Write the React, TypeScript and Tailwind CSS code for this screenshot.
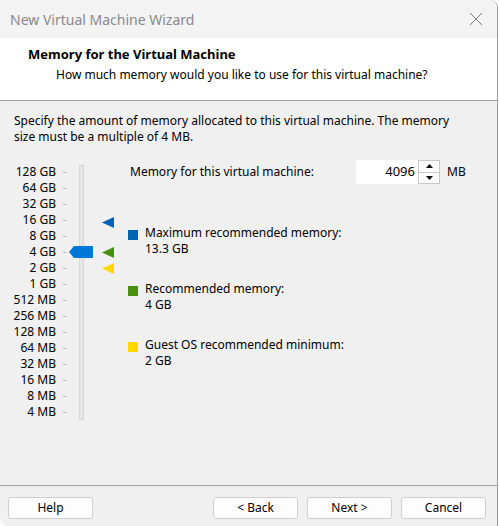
import React from 'react';

const sizes = [
  '128 GB', '64 GB', '32 GB', '16 GB', '8 GB', '4 GB', '2 GB', '1 GB',
  '512 MB', '256 MB', '128 MB', '64 MB', '32 MB', '16 MB', '8 MB', '4 MB',
];

function Tri({ color }: { color: string }) {
  return (
    <svg width="12" height="11" viewBox="0 0 12 11">
      <polygon points="0,5.5 12,0 12,11" fill={color} />
    </svg>
  );
}

function Button({ label }: { label: string }) {
  return (
    <button className="h-[22px] w-[85px] rounded-[3px] border border-[#d0d0d0] bg-[#fdfdfd] text-[12px] text-black">
      {label}
    </button>
  );
}

export default function App() {
  return (
    <div
      className="relative h-[526px] w-[499px] overflow-hidden bg-white"
      style={{ fontFamily: '"Segoe UI", "Noto Sans", sans-serif' }}
    >
      <div className="flex h-full w-[498px] flex-col overflow-hidden rounded-tr-[8px] rounded-bl-[8px] border-r border-[#9a9a9a] bg-[#f0f0f0]">
        {/* title bar */}
        <div className="flex h-[38px] items-center justify-between bg-[#f3f3f3] pl-[10px] pr-[14px]">
          <span className="text-[14px] text-[#8a8a8a]">New Virtual Machine Wizard</span>
          <svg width="14" height="14" viewBox="0 0 14 14">
            <path d="M1 1L13 13M13 1L1 13" stroke="#7a7a7a" strokeWidth="1" />
          </svg>
        </div>

        {/* header */}
        <div className="h-[63px] border-b border-[#a0a0a0] bg-white pl-[28px] pt-[7px]">
          <div className="text-[13px] font-bold leading-[18px] text-black">Memory for the Virtual Machine</div>
          <div className="pl-[28px] pt-[3px] text-[12px] leading-[18px] text-black">
            How much memory would you like to use for this virtual machine?
          </div>
        </div>

        {/* body */}
        <div className="flex-1 px-[14px] pt-[12px] text-[12px] text-black">
          <p className="w-[448px] leading-[16px]">
            Specify the amount of memory allocated to this virtual machine. The memory size must be a multiple of 4 MB.
          </p>

          <div className="mt-[19px] flex">
            {/* scale */}
            <div className="flex w-[42px] flex-col items-end">
              {sizes.map((s) => (
                <div key={s} className="h-[16px] whitespace-nowrap leading-[16px]">{s}</div>
              ))}
            </div>
            <div className="ml-[7px] flex w-[6px] flex-col pt-[8px]">
              {sizes.map((s) => (
                <div key={s} className="mb-[15px] h-px w-[3px] bg-[#b4b4b4]" />
              ))}
            </div>
            {/* track */}
            <div className="relative ml-[3px] h-[256px] w-[40px]">
              <div className="absolute left-[7px] top-[1px] h-[255px] w-[5px] border border-[#d6d6d6] bg-[#e6e6e6]" />
              <svg className="absolute left-[-3px] top-[81px]" width="24" height="14" viewBox="0 0 24 14">
                <polygon points="0,7 5,1 24,1 24,13 5,13" fill="#0078d7" />
              </svg>
              <div className="absolute left-[30px] top-[53px]"><Tri color="#0063b1" /></div>
              <div className="absolute left-[30px] top-[83px]"><Tri color="#4a8c10" /></div>
              <div className="absolute left-[30px] top-[99px]"><Tri color="#ffd800" /></div>
            </div>

            {/* right side */}
            <div className="ml-[16px] flex-1">
              <div className="flex h-[16px] items-center">
                <span className="w-[228px] pl-[2px]">Memory for this virtual machine:</span>
                <div className="flex h-[24px] items-center">
                  <div className="flex h-[24px] w-[62px] items-center justify-end bg-white pr-[3px] text-[13px]">4096</div>
                  <div className="flex h-[24px] w-[22px] flex-col border border-[#c8c8c8] bg-[#f0f0f0]">
                    <div className="flex flex-1 items-center justify-center border-b border-[#c8c8c8] bg-white">
                      <svg width="7" height="4" viewBox="0 0 7 4"><polygon points="3.5,0 7,4 0,4" fill="#000" /></svg>
                    </div>
                    <div className="flex flex-1 items-center justify-center bg-white">
                      <svg width="7" height="4" viewBox="0 0 7 4"><polygon points="0,0 7,0 3.5,4" fill="#000" /></svg>
                    </div>
                  </div>
                  <span className="ml-[7px]">MB</span>
                </div>
              </div>

              <div className="mt-[45px] flex flex-col gap-[24px]">
                {[
                  ['#0063b1', 'Maximum recommended memory:', '13.3 GB'],
                  ['#4a9010', 'Recommended memory:', '4 GB'],
                  ['#ffd800', 'Guest OS recommended minimum:', '2 GB'],
                ].map(([c, t, v]) => (
                  <div key={t} className="flex">
                    <div className="mt-[5px] h-[10px] w-[10px]" style={{ background: c }} />
                    <div className="ml-[7px] leading-[16px]">
                      <div>{t}</div>
                      <div>{v}</div>
                    </div>
                  </div>
                ))}
              </div>
            </div>
          </div>
        </div>

        {/* footer */}
        <div className="h-[41px] border-t border-[#a0a0a0] px-[8px] pt-[11px]">
          <div className="flex">
            <Button label="Help" />
            <div className="flex-1" />
            <div className="flex gap-[9px] pr-[3px]">
              <Button label="< Back" />
              <Button label="Next >" />
              <Button label="Cancel" />
            </div>
          </div>
        </div>
      </div>
    </div>
  );
}
